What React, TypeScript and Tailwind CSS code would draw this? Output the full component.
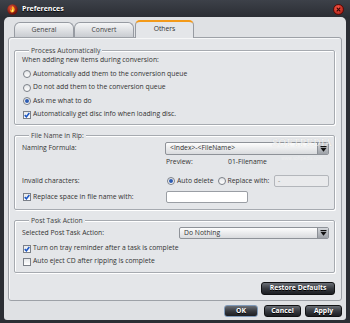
import React from "react";

function Radio({ checked }: { checked?: boolean }) {
  return (
    <span className="flex w-[8px] h-[8px] shrink-0 items-center justify-center rounded-full border border-[#7b8088] bg-linear-to-b from-[#e3e5e8] to-white">
      {checked && <span className="w-[4px] h-[4px] rounded-full bg-[#2d5cb2]" />}
    </span>
  );
}

function Check({ checked }: { checked?: boolean }) {
  return (
    <span className="flex w-[8px] h-[8px] shrink-0 items-center justify-center border border-[#7b8088] bg-linear-to-b from-[#e6e8ea] to-white">
      {checked && (
        <svg width="6" height="6" viewBox="0 0 6 6">
          <path d="M0.7 3.1 L2.4 4.8 L5.3 1.0" stroke="#1b56c4" strokeWidth="1.5" fill="none" />
        </svg>
      )}
    </span>
  );
}

function Arrow() {
  return (
    <span className="flex w-[11px] h-full shrink-0 items-center justify-center border-l border-[#8c9096] bg-linear-to-b from-[#d4d7db] to-[#9da1a7]">
      <svg width="7" height="6" viewBox="0 0 7 6">
        <rect x="0.5" y="0" width="6" height="1.2" fill="#111" />
        <path d="M0.5 2 L6.5 2 L3.5 5.8 Z" fill="#111" />
      </svg>
    </span>
  );
}

function Dropdown({ text }: { text: string }) {
  return (
    <div className="flex flex-1 h-full items-center overflow-hidden rounded-[2px] border border-[#8e9298] bg-linear-to-b from-[#fdfdfd] to-[#d9dbde]">
      <span className="flex-1 pl-[4px] text-[#333]">{text}</span>
      <Arrow />
    </div>
  );
}

function DarkButton({ label, className }: { label: string; className: string }) {
  return (
    <div
      className={
        "flex items-center justify-center rounded-[3px] border bg-linear-to-b from-[#6b6f76] via-[#383b41] to-[#1c1e22] font-bold text-white [text-shadow:0_1px_0_#000] " +
        className
      }
    >
      {label}
    </div>
  );
}

export default function App() {
  return (
    <div className="relative flex h-[323px] w-[350px] flex-col overflow-hidden bg-[#2b2e34] font-['Open_Sans','Noto_Sans',sans-serif] text-[6.8px] leading-none text-[#333]">
      {/* title bar */}
      <div className="flex h-[17px] shrink-0 items-center bg-linear-to-b from-[#3d4149] to-[#2b2e34] pl-[7px] pr-[6px]">
        <svg width="11" height="11" viewBox="0 0 11 11" className="mt-[1px]">
          <defs>
            <radialGradient id="ig" cx="40%" cy="35%" r="65%">
              <stop offset="0" stopColor="#e8573a" />
              <stop offset="1" stopColor="#6e0d08" />
            </radialGradient>
          </defs>
          <circle cx="5.5" cy="5.5" r="5.2" fill="url(#ig)" />
          <path d="M5.6 2 C7.4 3.6 8 5.2 7.4 6.8 C6.9 8.3 5.4 8.8 4.3 8.3 C3.1 7.7 2.9 6.2 3.7 5.1 C3.9 6 4.4 6.4 4.9 6.3 C4.4 5 4.8 3.4 5.6 2 Z" fill="#ffb21e" />
          <path d="M5.5 5 C6.4 5.9 6.5 7 5.8 7.6 C5.2 8 4.5 7.6 4.6 6.9 C5 7 5.3 6.6 5.5 5 Z" fill="#fff3a0" />
        </svg>
        <span className="ml-[4px] text-[7px] font-bold text-white [text-shadow:0_1px_1px_#000]">Preferences</span>
        <span className="ml-auto flex h-[11px] w-[11px] items-center justify-center rounded-full border border-[#5a0a06] bg-radial-[at_40%_35%] from-[#ff5c4a] to-[#9c1209] mt-[1px]">
          <svg width="5" height="5" viewBox="0 0 5 5">
            <path d="M0.7 0.7 L4.3 4.3 M4.3 0.7 L0.7 4.3" stroke="#3a0503" strokeWidth="1.2" />
          </svg>
        </span>
      </div>

      {/* content */}
      <div className="mx-[4px] flex h-[303px] shrink-0 flex-col rounded-t-[5px] rounded-b-[3px] bg-[#dfe1e4]">
        {/* tabs */}
        <div className="relative z-10 flex h-[20px] shrink-0 items-end pl-[10px]">
          <div className="flex h-[15px] w-[60px] items-center justify-center rounded-t-[6px] border border-b-0 border-[#979ba2] bg-linear-to-b from-[#f5f6f7] to-[#c9ccd1] text-[#444]">
            General
          </div>
          <div className="flex h-[15px] w-[60px] items-center justify-center rounded-t-[6px] border border-b-0 border-[#979ba2] bg-linear-to-b from-[#f5f6f7] to-[#c9ccd1] text-[#444]">
            Convert
          </div>
          <div className="-mb-px ml-[1px] flex h-[18px] w-[59px] items-center justify-center rounded-t-[5px] border border-b-0 border-[#979ba2] border-t-2 border-t-[#f39a1a] bg-[#e4e6e9] pb-[1px] text-[#333]">
            Others
          </div>
        </div>

        {/* panel */}
        <div className="relative ml-[4px] flex h-[264px] w-[334px] shrink-0 flex-col rounded-[3px] border border-[#9da1a7] bg-[#e4e6e9] pl-[5px] pr-[6px] pt-[12px] shadow-[inset_1px_1px_0_#f6f7f8]">
          {/* group 1 */}
          <div className="relative h-[75px] shrink-0 rounded-[2px] border border-[#a6aab0] pl-[7px] pt-[3px] shadow-[inset_1px_1px_0_#fff,1px_1px_0_#fff]">
            <span className="absolute left-[14px] top-[-6px] bg-[#e4e6e9] px-[2px] leading-[11px] text-[#3e3e3e]">Process Automatically</span>
            <div className="flex h-[13.5px] items-center">When adding new items during conversion:</div>
            <div className="flex h-[13.5px] items-center gap-[2px] pl-[1px]">
              <Radio />
              <span>Automatically add them to the conversion queue</span>
            </div>
            <div className="flex h-[13.5px] items-center gap-[2px] pl-[1px]">
              <Radio />
              <span>Do not add them to the conversion queue</span>
            </div>
            <div className="flex h-[13.5px] items-center gap-[2px] pl-[1px]">
              <Radio checked />
              <span>Ask me what to do</span>
            </div>
            <div className="flex h-[13.5px] items-center gap-[2px] pl-[1px]">
              <Check checked />
              <span>Automatically get disc info when loading disc.</span>
            </div>
          </div>

          {/* group 2 */}
          <div className="relative mt-[10px] h-[75px] shrink-0 rounded-[2px] border border-[#a6aab0] pl-[7px] pr-[5px] pt-[6px] shadow-[inset_1px_1px_0_#fff,1px_1px_0_#fff]">
            <span className="absolute left-[14px] top-[-6px] bg-[#e4e6e9] px-[2px] leading-[11px] text-[#3e3e3e]">File Name in Rip:</span>
            <div className="flex h-[13px] items-center">
              <span className="w-[143px] shrink-0">Naming Formula:</span>
              <Dropdown text="<Index>-<FileName>" />
            </div>
            <div className="flex h-[15px] items-center">
              <span className="w-[144px] shrink-0" />
              <span className="w-[62px] shrink-0">Preview:</span>
              <span>01-Filename</span>
            </div>
            <div className="mt-[5px] flex h-[12px] items-center">
              <span className="w-[145px] shrink-0">Invalid characters:</span>
              <Radio checked />
              <span className="ml-[2px]">Auto delete</span>
              <span className="ml-[4px]" />
              <Radio />
              <span className="ml-[2px]">Replace with:</span>
              <div className="ml-auto flex h-full w-[55px] items-center rounded-[2px] border border-[#b3b6bb] bg-[#e9eaec] pl-[3px] text-[#888]">-</div>
            </div>
            <div className="mt-[4px] flex h-[12px] items-center">
              <div className="flex w-[144px] shrink-0 items-center gap-[2px] pl-[1px]">
                <Check checked />
                <span>Replace space in file name with:</span>
              </div>
              <div className="h-full w-[82px] rounded-[2px] border border-[#9a9ea4] bg-white" />
            </div>
          </div>

          {/* group 3 */}
          <div className="relative mt-[10px] h-[53px] shrink-0 rounded-[2px] border border-[#a6aab0] pl-[7px] pr-[5px] pt-[6px] shadow-[inset_1px_1px_0_#fff,1px_1px_0_#fff]">
            <span className="absolute left-[14px] top-[-6px] bg-[#e4e6e9] px-[2px] leading-[11px] text-[#3e3e3e]">Post Task Action</span>
            <div className="flex h-[12px] items-center">
              <span className="w-[157px] shrink-0">Selected Post Task Action:</span>
              <Dropdown text="Do Nothing" />
            </div>
            <div className="mt-[3px] flex h-[13px] items-center gap-[2px] pl-[1px]">
              <Check checked />
              <span>Turn on tray reminder after a task is complete</span>
            </div>
            <div className="flex h-[13px] items-center gap-[2px] pl-[1px]">
              <Check />
              <span>Auto eject CD after ripping is complete</span>
            </div>
          </div>

          <div className="mt-[9px] flex justify-end">
            <DarkButton label="Restore Defaults" className="h-[13px] w-[74px] border-[#111214]" />
          </div>

          {/* watermark */}
          <div className="pointer-events-none absolute left-[260px] top-[101px] flex w-[66px] flex-col items-center text-white opacity-70">
            <span className="font-['DejaVu_Serif',serif] text-[9px] tracking-[0.5px] [text-shadow:0_0_1px_#aaa]">SOFTPEDIA</span>
            <span className="mt-[8px] text-[4.5px] text-[#f4f4f4]">www.softpedia.com</span>
          </div>
        </div>

        {/* bottom buttons */}
        <div className="mt-[4px] flex h-[12px] justify-end pr-[4px]">
          <DarkButton label="OK" className="h-[12px] w-[34px] border-[#7f99b8]" />
          <DarkButton label="Cancel" className="ml-[6px] h-[12px] w-[37px] border-[#111214]" />
          <DarkButton label="Apply" className="ml-[4px] h-[12px] w-[37px] border-[#111214]" />
        </div>
      </div>
    </div>
  );
}
